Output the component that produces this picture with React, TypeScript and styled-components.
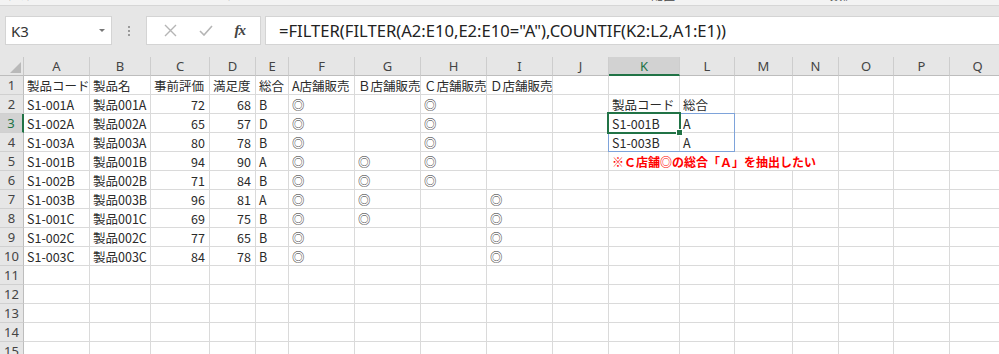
import React from "react";
import styled, { createGlobalStyle } from "styled-components";

const GlobalStyle = createGlobalStyle`
  html, body {
    margin: 0;
    padding: 0;
    background: #ffffff;
    overflow: hidden;
  }
  body {
    font-family: "Noto Sans CJK JP", "Noto Sans", sans-serif;
  }
`;

const COLS = [
  { label: "A", width: 66 },
  { label: "B", width: 61 },
  { label: "C", width: 59 },
  { label: "D", width: 46 },
  { label: "E", width: 33 },
  { label: "F", width: 66 },
  { label: "G", width: 66 },
  { label: "H", width: 66 },
  { label: "I", width: 66 },
  { label: "J", width: 56 },
  { label: "K", width: 71 },
  { label: "L", width: 55 },
  { label: "M", width: 58 },
  { label: "N", width: 46 },
  { label: "O", width: 55 },
  { label: "P", width: 56 },
  { label: "Q", width: 56 },
];

const ROW_HEAD = 24;
const ROW_H = 19;
const ROW_COUNT = 15;

type Cell = string | number | null;

// columns A..I for rows 1..10
const DATA: Cell[][] = [
  ["製品コード", "製品名", "事前評価", "満足度", "総合", "A店舗販売", "Ｂ店舗販売", "Ｃ店舗販売", "Ｄ店舗販売"],
  ["S1-001A", "製品001A", 72, 68, "B", "◎", null, "◎", null],
  ["S1-002A", "製品002A", 65, 57, "D", "◎", null, "◎", null],
  ["S1-003A", "製品003A", 80, 78, "B", "◎", null, "◎", null],
  ["S1-001B", "製品001B", 94, 90, "A", "◎", "◎", "◎", null],
  ["S1-002B", "製品002B", 71, 84, "B", "◎", "◎", "◎", null],
  ["S1-003B", "製品003B", 96, 81, "A", "◎", "◎", null, "◎"],
  ["S1-001C", "製品001C", 69, 75, "B", "◎", "◎", null, "◎"],
  ["S1-002C", "製品002C", 77, 65, "B", "◎", null, null, "◎"],
  ["S1-003C", "製品003C", 84, 78, "B", "◎", null, null, "◎"],
];

// columns K, L
const RESULT: Record<number, Cell[]> = {
  2: ["製品コード", "総合"],
  3: ["S1-001B", "A"],
  4: ["S1-003B", "A"],
};

const colLeft = (idx: number) =>
  ROW_HEAD + COLS.slice(0, idx).reduce((s, c) => s + c.width, 0);
const rowTop = (row: number) => ROW_H * row; // row 0 = header, inside grid

const Page = styled.div`
  width: 999px;
  height: 354px;
  overflow: hidden;
  background: #ffffff;
`;

const RibbonEdge = styled.div`
  height: 5px;
  overflow: hidden;
  background: #f3f3f3;
  border-bottom: 1px solid #d6d6d6;
  display: flex;
  font-size: 12px;
  color: #444;
`;

const RibbonLabel = styled.span<{ $left: number }>`
  margin-left: ${(p) => p.$left}px;
  margin-top: -12px;
  line-height: 14px;
  white-space: nowrap;
`;

const FormulaBar = styled.div`
  height: 51px;
  background: #e6e6e6;
  display: flex;
  align-items: flex-start;
  padding: 10px 0 0 5px;
  box-sizing: border-box;
`;

const NameBox = styled.div`
  width: 107px;
  height: 29px;
  box-sizing: border-box;
  background: #ffffff;
  border: 1px solid #d4d4d4;
  display: flex;
  align-items: center;
  justify-content: space-between;
  padding: 0 6px 0 5px;
  font-family: "Noto Sans", sans-serif;
  font-size: 15px;
  color: #333;
`;

const Caret = styled.span`
  width: 0;
  height: 0;
  border-left: 3px solid transparent;
  border-right: 3px solid transparent;
  border-top: 3px solid #777;
`;

const Grip = styled.div`
  width: 34px;
  height: 29px;
  display: flex;
  flex-direction: column;
  align-items: center;
  justify-content: center;
  gap: 2px;
`;

const GripDot = styled.span`
  width: 2px;
  height: 2px;
  background: #9a9a9a;
`;

const ActionBox = styled.div`
  width: 115px;
  height: 29px;
  box-sizing: border-box;
  background: #ffffff;
  border: 1px solid #d4d4d4;
  display: flex;
  align-items: center;
  justify-content: space-around;
  padding: 0 4px 0 6px;
`;

const Fx = styled.span`
  font-family: "Liberation Serif", "DejaVu Serif", serif;
  font-style: italic;
  font-weight: bold;
  font-size: 15px;
  color: #444;
  letter-spacing: -1px;
`;

const FormulaInput = styled.div`
  flex: 1;
  margin-left: 4px;
  height: 29px;
  box-sizing: border-box;
  background: #ffffff;
  border: 1px solid #d4d4d4;
  border-right: none;
  display: flex;
  align-items: center;
  padding-left: 13px;
  font-family: "Noto Sans", sans-serif;
  font-size: 16.6px;
  color: #222;
  white-space: nowrap;
`;

const SheetWrap = styled.div`
  position: relative;
`;

const Grid = styled.div`
  display: grid;
  grid-template-columns: ${ROW_HEAD}px ${COLS.map((c) => `${c.width}px`).join(" ")};
  grid-auto-rows: ${ROW_H}px;
`;

const Corner = styled.div`
  position: relative;
  background: #e6e6e6;
  border-right: 1px solid #c8c8c8;
  border-bottom: 1px solid #bdbdbd;
  box-sizing: border-box;
  &::after {
    content: "";
    position: absolute;
    right: 2px;
    bottom: 2px;
    border-left: 11px solid transparent;
    border-bottom: 11px solid #b9b9b9;
  }
`;

const ColHead = styled.div<{ $active?: boolean }>`
  background: ${(p) => (p.$active ? "#d2d2d2" : "#e6e6e6")};
  border-right: 1px solid #cdcdcd;
  border-bottom: ${(p) => (p.$active ? "2px solid #217346" : "1px solid #bdbdbd")};
  box-sizing: border-box;
  display: flex;
  align-items: center;
  justify-content: center;
  font-family: "Noto Sans", sans-serif;
  font-size: 13px;
  color: ${(p) => (p.$active ? "#217346" : "#444")};
`;

const RowHead = styled.div<{ $active?: boolean }>`
  background: ${(p) => (p.$active ? "#d2d2d2" : "#e6e6e6")};
  border-right: ${(p) => (p.$active ? "2px solid #217346" : "1px solid #bdbdbd")};
  border-bottom: 1px solid #d0d0d0;
  box-sizing: border-box;
  display: flex;
  align-items: center;
  justify-content: center;
  font-family: "Noto Sans", sans-serif;
  font-size: 13px;
  color: ${(p) => (p.$active ? "#217346" : "#444")};
`;

const DataCell = styled.div<{ $num?: boolean; $span?: number; $note?: boolean }>`
  grid-column: span ${(p) => p.$span ?? 1};
  border-right: 1px solid #dadada;
  border-bottom: 1px solid #dadada;
  box-sizing: border-box;
  display: flex;
  align-items: center;
  justify-content: ${(p) => (p.$num ? "flex-end" : "flex-start")};
  padding: 1px 4px 0 3px;
  font-size: ${(p) => (p.$note ? "12px" : "12.5px")};
  line-height: 18px;
  color: ${(p) => (p.$note ? "#ff0000" : "#2a2a2a")};
  font-weight: ${(p) => (p.$note ? 700 : 400)};
  white-space: nowrap;
  overflow: visible;
`;

const SpillRange = styled.div`
  position: absolute;
  border: 1px solid #7ea3da;
  box-sizing: border-box;
  pointer-events: none;
`;

const ActiveCell = styled.div`
  position: absolute;
  border: 2px solid #217346;
  box-sizing: border-box;
  pointer-events: none;
`;

const FillHandle = styled.div`
  position: absolute;
  width: 5px;
  height: 5px;
  background: #217346;
  border: 1px solid #ffffff;
  box-sizing: content-box;
`;

function CrossIcon() {
  return (
    <svg width="13" height="13" viewBox="0 0 13 13">
      <path d="M1 1 L12 12 M12 1 L1 12" stroke="#b5b5b5" strokeWidth="1.4" fill="none" />
    </svg>
  );
}

function CheckIcon() {
  return (
    <svg width="14" height="11" viewBox="0 0 14 11">
      <path d="M1 6 L5 10 L13 1" stroke="#b5b5b5" strokeWidth="1.6" fill="none" />
    </svg>
  );
}

function cellAt(row: number, col: number): Cell {
  if (row >= 1 && row <= 10 && col <= 8) return DATA[row - 1][col];
  if (RESULT[row] && (col === 10 || col === 11)) return RESULT[row][col - 10];
  return null;
}

export default function App() {
  const rows = [];
  for (let r = 1; r <= ROW_COUNT; r++) {
    const cells = [];
    cells.push(
      <RowHead key="h" $active={r === 3}>
        {r}
      </RowHead>
    );
    for (let c = 0; c < COLS.length; c++) {
      if (r === 5 && c === 10) {
        cells.push(
          <DataCell key={c} $span={4} $note>
            ※Ｃ店舗◎の総合「Ａ」を抽出したい
          </DataCell>
        );
        c += 3;
        continue;
      }
      const v = cellAt(r, c);
      cells.push(
        <DataCell key={c} $num={typeof v === "number"}>
          {v}
        </DataCell>
      );
    }
    rows.push(<React.Fragment key={r}>{cells}</React.Fragment>);
  }

  const kLeft = colLeft(10);
  const lRight = colLeft(12);

  return (
    <Page>
      <GlobalStyle />
      <RibbonEdge>
        <RibbonLabel $left={8}>ｸﾘｯﾌﾟﾎﾞｰﾄﾞ　⌐</RibbonLabel>
        <RibbonLabel $left={140}>ﾌｫﾝﾄ</RibbonLabel>
        <RibbonLabel $left={400}>配置</RibbonLabel>
        <RibbonLabel $left={155}>数値</RibbonLabel>
      </RibbonEdge>
      <FormulaBar>
        <NameBox>
          K3
          <Caret />
        </NameBox>
        <Grip>
          <GripDot />
          <GripDot />
          <GripDot />
        </Grip>
        <ActionBox>
          <CrossIcon />
          <CheckIcon />
          <Fx>fx</Fx>
        </ActionBox>
        <FormulaInput>=FILTER(FILTER(A2:E10,E2:E10="A"),COUNTIF(K2:L2,A1:E1))</FormulaInput>
      </FormulaBar>
      <SheetWrap>
        <Grid>
          <Corner />
          {COLS.map((c) => (
            <ColHead key={c.label} $active={c.label === "K"}>
              {c.label}
            </ColHead>
          ))}
          {rows}
        </Grid>
        <SpillRange
          style={{ left: kLeft - 1, top: rowTop(3) - 1, width: lRight - kLeft + 1, height: ROW_H * 2 + 1 }}
        />
        <ActiveCell style={{ left: kLeft - 2, top: rowTop(3) - 2, width: COLS[10].width + 3, height: ROW_H + 3 }} />
        <FillHandle style={{ left: kLeft + COLS[10].width - 4, top: rowTop(3) + ROW_H - 4 }} />
      </SheetWrap>
    </Page>
  );
}
